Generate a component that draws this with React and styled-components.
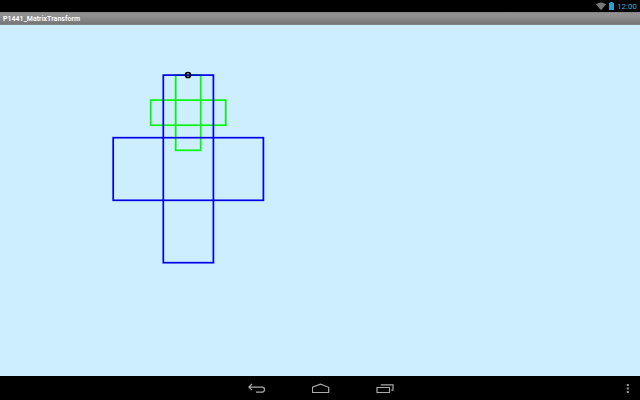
import React from "react";
import styled, { createGlobalStyle } from "styled-components";

const GlobalStyle = createGlobalStyle`
  body { margin: 0; background: #000; }
`;

const Screen = styled.div`
  width: 640px;
  height: 400px;
  display: grid;
  grid-template-rows: 12px 13px 351px 24px;
  overflow: hidden;
  background: #000;
  font-family: Roboto, sans-serif;
`;

const StatusBar = styled.header`
  display: flex;
  justify-content: flex-end;
  align-items: flex-start;
  padding-right: 2px;
  background: #000;
`;

const StatusIcon = styled.svg`
  flex: none;
  display: block;
  margin-right: ${(p) => p.$gap}px;
`;

const Clock = styled.time`
  width: 21px;
  padding-top: 1px;
  color: #32afdc;
  font-size: 8px;
  line-height: 12px;
  white-space: nowrap;
`;

const TitleBar = styled.div`
  box-sizing: border-box;
  padding: 1px 0 0 3px;
  background: linear-gradient(#808080, #929292 12%, #909090 30%, #767676 92%, #858c90);
  color: #fff;
  font-size: 7px;
  font-weight: 600;
  line-height: 12px;
  letter-spacing: 0.03px;
`;

const Canvas = styled.main`
  background: #cceeff;
`;

const Drawing = styled.svg`
  display: block;
`;

const NavBar = styled.nav`
  display: grid;
  grid-template-columns: 225px 64px 64px 64px 1fr 24px;
  align-items: center;
  justify-items: center;
  background: #000;
`;

const NavButton = styled.button`
  grid-column: ${(p) => p.$column};
  display: flex;
  align-items: center;
  justify-content: center;
  width: 100%;
  height: 24px;
  padding: 0;
  border: 0;
  background: none;
`;

export default function App() {
  return (
    <>
      <GlobalStyle />
      <Screen>
        <StatusBar>
          <StatusIcon $gap={3} width="10" height="12" viewBox="0 0 10 12">
            <path d="M0 4.2Q5 .8 10 4.2L5 10.2Z" fill="#777" />
          </StatusIcon>
          <StatusIcon $gap={3} width="5" height="12" viewBox="0 0 5 12">
            <path d="M1.3 2h2.4v.8H5V10H0V2.8h1.3z" fill="#2f9fc8" />
          </StatusIcon>
          <Clock>12:00</Clock>
        </StatusBar>
        <TitleBar>P1441_MatrixTransform</TitleBar>
        <Canvas>
          <Drawing width="640" height="351" viewBox="0 25 640 351" fill="none">
            <g stroke="#00f80c" strokeWidth="1.7">
              <rect x="175.7" y="75.1" width="25" height="75.2" />
              <rect x="150.7" y="100.1" width="75.1" height="25.1" />
            </g>
            <g stroke="#0000e8" strokeWidth="1.7">
              <rect x="163.3" y="75.1" width="50.1" height="187.6" />
              <rect x="113.2" y="137.7" width="150.2" height="62.6" />
            </g>
            <circle cx="188" cy="75" r="2.5" stroke="#000" strokeWidth="1.7" />
          </Drawing>
        </Canvas>
        <NavBar>
          <NavButton $column={2} aria-label="Back">
            <svg width="18" height="12" viewBox="248 382 18 12" fill="none" stroke="#aaa" strokeWidth="1.2">
              <path d="M252 384L248.9 387.1l3.1 3M249 387.1h13.2q2.3 0 2.3 2.5t-2.3 2.6H256" />
            </svg>
          </NavButton>
          <NavButton $column={3} aria-label="Home">
            <svg width="18" height="12" viewBox="312 382 18 12" fill="none" stroke="#aaa" strokeWidth="1.2">
              <path d="M312.5 392.5v-5.2l8-3.2 8.2 3.2v5.2z" />
            </svg>
          </NavButton>
          <NavButton $column={4} aria-label="Recent apps">
            <svg width="18" height="12" viewBox="376 382 18 12" fill="none" stroke="#aaa" strokeWidth="1.2">
              <path d="M377 387.5h12.5v5H377zM380.7 384.8H393v5.4h-1.8" />
            </svg>
          </NavButton>
          <NavButton $column={6} aria-label="More options">
            <svg width="4" height="12" viewBox="0 0 4 12" fill="#999">
              <path d="M.8 2h2v2h-2zM.8 5.5h2v2h-2zM.8 9h2v2h-2z" />
            </svg>
          </NavButton>
        </NavBar>
      </Screen>
    </>
  );
}
